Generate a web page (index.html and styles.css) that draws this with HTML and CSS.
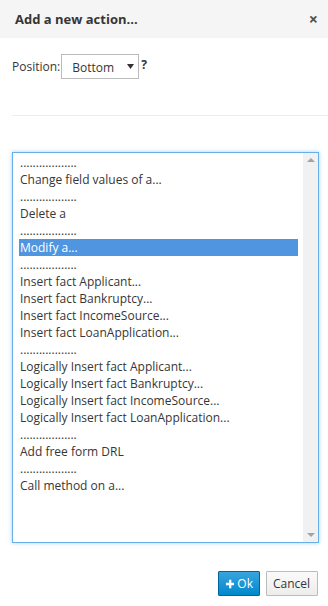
FILE: index.html
```html
<!DOCTYPE html>
<html lang="en">
<head>
    <meta charset="UTF-8">
    <meta name="viewport" content="width=device-width, initial-scale=1.0">
    <title>Add a new action</title>
    <link rel="stylesheet" href="styles.css">
</head>
<body>
    <div class="modal">
        <div class="modal-header">
            <h4 class="modal-title">Add a new action...</h4>
            <span class="close">&times;</span>
        </div>

        <div class="modal-body">
            <div class="position-row">
                <label>Position:</label>
                <div class="select-box">
                    <span>Bottom</span>
                    <svg class="caret" width="7" height="5" viewBox="0 0 7 5"><path d="M0 0H7L3.5 5Z" fill="#333"/></svg>
                </div>
                <span class="help">?</span>
            </div>

            <hr class="divider">

            <div class="listbox">
                <ul class="options">
                    <li>..................</li>
                    <li>Change field values of a...</li>
                    <li>..................</li>
                    <li>Delete a</li>
                    <li>..................</li>
                    <li class="selected">Modify a...</li>
                    <li>..................</li>
                    <li>Insert fact Applicant...</li>
                    <li>Insert fact Bankruptcy...</li>
                    <li>Insert fact IncomeSource...</li>
                    <li>Insert fact LoanApplication...</li>
                    <li>..................</li>
                    <li>Logically Insert fact Applicant...</li>
                    <li>Logically Insert fact Bankruptcy...</li>
                    <li>Logically Insert fact IncomeSource...</li>
                    <li>Logically Insert fact LoanApplication...</li>
                    <li>..................</li>
                    <li>Add free form DRL</li>
                    <li>..................</li>
                    <li>Call method on a...</li>
                </ul>
                <div class="scrollbar">
                    <span class="arrow up"></span>
                    <span class="arrow down"></span>
                </div>
            </div>
        </div>

        <div class="modal-footer">
            <button class="btn btn-primary">
                <svg class="plus" width="10" height="10" viewBox="0 0 10 10"><path d="M3.6 0H6.4V3.6H10V6.4H6.4V10H3.6V6.4H0V3.6H3.6Z" fill="#fff"/></svg>Ok
            </button>
            <button class="btn btn-default">Cancel</button>
        </div>
    </div>
</body>
</html>
```

FILE: styles.css
```css
:root {
    --text-color: #363636;
    --header-bg: #f5f5f5;
    --border-color: #bbbbbb;
    --focus-color: #66afe9;
    --selected-color: #5095e0;
    --primary-color: #0088ce;
}

* {
    margin: 0;
    padding: 0;
    box-sizing: border-box;
}

body {
    font-family: 'Open Sans', 'Liberation Sans', sans-serif;
    font-size: 12px;
    color: var(--text-color);
    background-color: #ffffff;
    overflow: hidden;
}

.modal {
    width: 328px;
    height: 606px;
    display: flex;
    flex-direction: column;
}

.modal-header {
    height: 38px;
    background-color: var(--header-bg);
    display: flex;
    align-items: center;
    justify-content: space-between;
    padding: 0 10px 0 15px;
}

.modal-title {
    font-size: 13px;
    font-weight: 700;
    color: #363636;
}

.close {
    font-size: 16px;
    font-weight: 700;
    color: #4d5258;
    line-height: 1;
}

.modal-body {
    padding: 16px 9px 0 12px;
}

.position-row {
    display: flex;
    align-items: center;
    height: 25px;
}

.position-row label {
    margin-right: 1px;
}

.select-box {
    width: 78px;
    height: 25px;
    border: 1px solid var(--border-color);
    display: flex;
    align-items: center;
    justify-content: space-between;
    padding: 2px 4px 0 10px;
    font-size: 12px;
}

.caret {
    margin-top: -2px;
}

.help {
    font-weight: 700;
    font-size: 12px;
    margin-left: 2px;
    margin-top: -4px;
}

.divider {
    border: none;
    border-top: 1px solid #ededed;
    margin: 36px -9px 0 0;
}

.listbox {
    margin-top: 36px;
    height: 391px;
    border: 1px solid var(--focus-color);
    box-shadow: 0 0 4px rgba(102, 175, 233, 0.6);
    display: flex;
}

.options {
    list-style: none;
    flex: 1;
    padding: 1px 5px 0 6px;
}

.options li {
    height: 17px;
    line-height: 17px;
    padding-left: 1px;
    white-space: nowrap;
}

.options li.selected {
    background-color: var(--selected-color);
    color: #ffffff;
}

.scrollbar {
    width: 15px;
    background-color: #f1f1f1;
    display: flex;
    flex-direction: column;
    justify-content: space-between;
    align-items: center;
    padding: 5px 0;
}

.arrow {
    width: 0;
    height: 0;
    border-left: 4px solid transparent;
    border-right: 4px solid transparent;
}

.arrow.up {
    border-bottom: 4px solid #a3a3a3;
}

.arrow.down {
    border-top: 4px solid #a3a3a3;
}

.modal-footer {
    display: flex;
    justify-content: flex-end;
    gap: 6px;
    padding: 28px 10px 0 0;
}

.btn {
    height: 25px;
    font-family: inherit;
    font-size: 12px;
    border-radius: 1px;
    padding: 0 6px;
    display: flex;
    align-items: center;
    cursor: pointer;
}

.btn-primary {
    width: 42px;
    color: #ffffff;
    background: linear-gradient(#39a5dc, #0088ce);
    border: 1px solid #00659c;
    padding-left: 7px;
}

.plus {
    margin-right: 3px;
}

.btn-default {
    width: 52px;
    color: var(--text-color);
    background: linear-gradient(#fafafa, #ededed);
    border: 1px solid var(--border-color);
}
```
